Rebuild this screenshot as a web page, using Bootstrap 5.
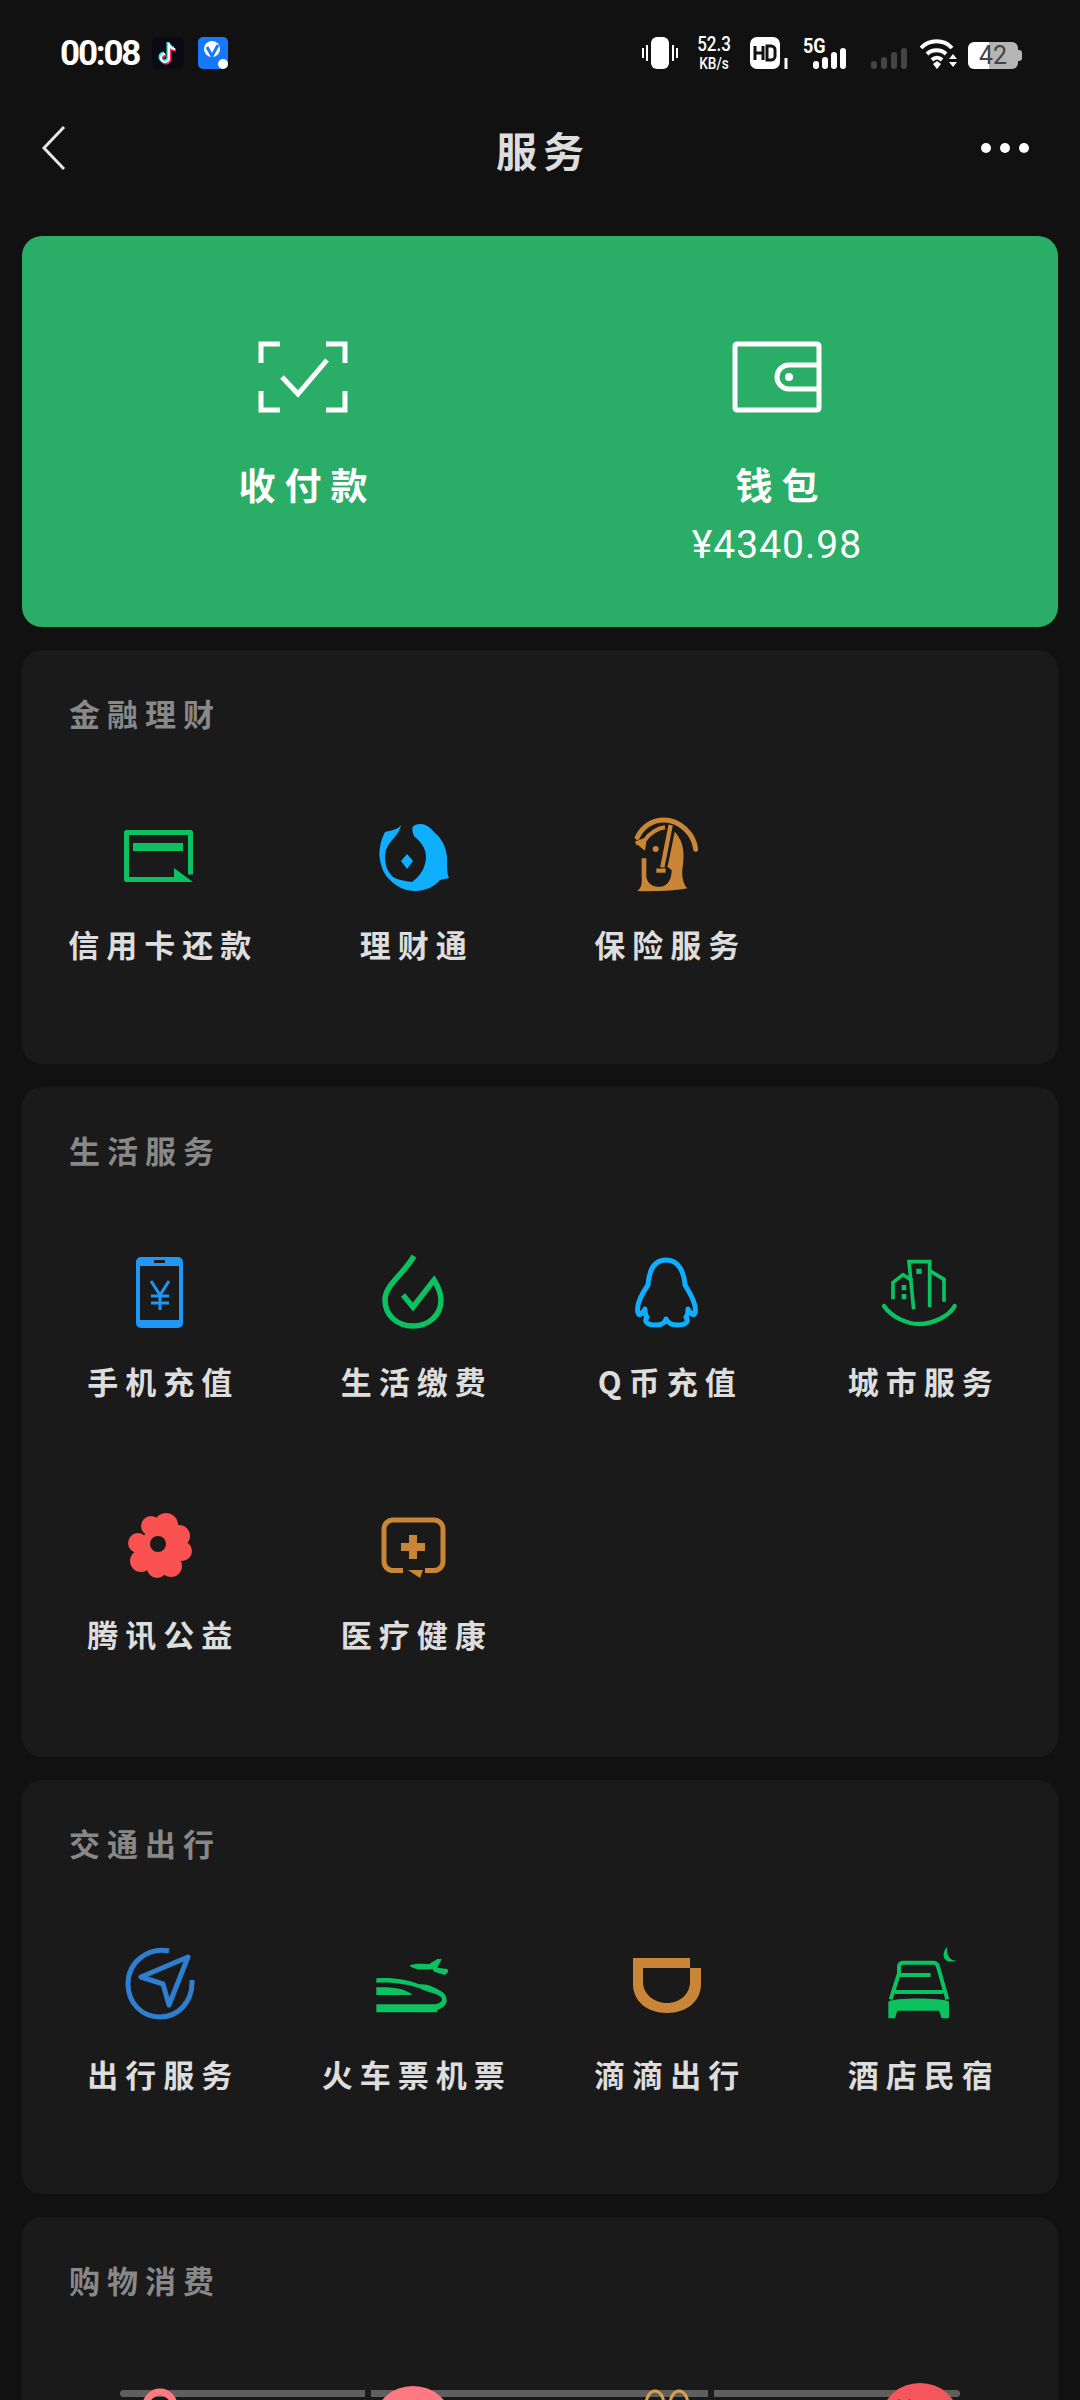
<!DOCTYPE html>
<html lang="zh">
<head>
  <meta charset="UTF-8" />
  <title>服务</title>
  <meta name="viewport" content="width=device-width, initial-scale=1" />
  <link href="https://cdn.jsdelivr.net/npm/bootstrap@5.3.3/dist/css/bootstrap.min.css" rel="stylesheet" />
  <style>
    body { background: #111; height: 2400px; overflow: hidden; font-family: "Noto Sans CJK SC", "Liberation Sans", sans-serif; }
    .status-row { height: 88px; padding: 37px 58px 0 60px; color: #fff; }
    .clock { font: 700 35px/34px Roboto, sans-serif; letter-spacing: -2.2px; width: 92px; }
    .blue-app { margin-left: 14px; }
    .net-speed { width: 48px; margin: -4px 0 0 12px; text-align: center; transform: scaleX(.85); white-space: nowrap; }
    .speed-num { font: 500 20px/22px Roboto, sans-serif; }
    .speed-unit { font: 500 16px/18px Roboto, sans-serif; }
    .hd-mark { margin-left: 12px; }
    .five-g-box { width: 46px; height: 32px; margin-left: 13px; }
    .five-g { font: 700 20px/18px Roboto, sans-serif; transform: scaleX(.9); transform-origin: left; }
    .gray-bars { margin-left: 22px; }
    .wifi-mark { margin-left: 13px; }
    .batt { width: 50px; height: 27px; margin: 5px 0 0 11px; border-radius: 6px; background: linear-gradient(90deg, #fff 42%, #b5b5b5 42%); color: #444; font: 400 25px/27px Roboto, sans-serif; text-align: center; }
    .batt-nub { width: 4px; height: 11px; margin-top: 13px; background: #b5b5b5; border-radius: 0 3px 3px 0; }
    .title-row { height: 120px; margin-bottom: 28px; padding: 0 50px 0 41px; }
    .back-slot { width: 69px; }
    .more-slot { width: 60px; }
    .page-title { font-size: 41px; line-height: 46px; font-weight: 700; color: #ddd; letter-spacing: 6px; padding-left: 6px; margin-top: 2px; }
    .pay-card { height: 391px; margin: 0 22px 23px; background: #2aae67; border-radius: 20px; padding: 105px 44px 0; color: #fff; }
    .pay-col { width: 474px; text-align: center; }
    .pay-name { font-size: 37px; line-height: 44px; font-weight: 700; letter-spacing: 9px; padding-left: 9px; margin-top: 49px; }
    .pay-sum { font: 400 39px/48px Roboto, sans-serif; letter-spacing: 1px; margin-top: 15px; }
    .svc-card { margin: 0 22px 23px; background: #1a1a1a; border-radius: 20px; padding: 42px 11px 100px; }
    .svc-card-tall { padding-bottom: 103px; }
    .svc-head { font-size: 31px; line-height: 42px; font-weight: 700; color: #888; letter-spacing: 7px; padding-left: 36px; }
    .svc-grid { display: grid; grid-template-columns: repeat(4, 1fr); grid-auto-rows: 148px; row-gap: 105px; padding-top: 82px; position: relative; }
    .svc-item { text-align: center; }
    .svc-item svg { display: block; margin: 0 auto; position: relative; z-index: 1; }
    .svc-name { font-size: 31px; line-height: 40px; font-weight: 700; color: #ddd; letter-spacing: 7px; padding-left: 7px; margin-top: 28px; white-space: nowrap; }
    .scroll-strip { position: absolute; left: 87px; top: 89px; width: 840px; height: 7px; gap: 6px; }
    .scroll-strip span { background: #5f5f5f; height: 7px; }
    .scroll-strip span:first-child { width: 245px; border-radius: 4px 0 0 4px; }
    .scroll-strip span:nth-child(2) { width: 337px; }
    .scroll-strip span:last-child { width: 246px; border-radius: 0 4px 4px 0; }
  </style>
</head>
<body>
  <div class="status-row d-flex align-items-start">
    <div class="clock">00:08</div>
    <svg width="32" height="32" viewBox="0 0 32 32"><rect width="32" height="32" rx="6" fill="#0a0a14"/><path d="M17 6v15a4 4 0 1 1-4-4M17 7c1 3 3 5 6 5" fill="none" stroke="#ff2d55" stroke-width="3" transform="translate(1 1)"/><path d="M17 6v15a4 4 0 1 1-4-4M17 7c1 3 3 5 6 5" fill="none" stroke="#25f4ee" stroke-width="3" transform="translate(-1 -1)"/><path d="M17 6v15a4 4 0 1 1-4-4M17 7c1 3 3 5 6 5" fill="none" stroke="#fff" stroke-width="2"/></svg>
    <svg class="blue-app" width="30" height="32" viewBox="0 0 30 32"><rect width="30" height="32" rx="5" fill="#1677ff"/><circle cx="14" cy="12" r="8" fill="#fff"/><path d="M9 10l5 9 6-11" fill="none" stroke="#1677ff" stroke-width="3"/><circle cx="25" cy="27" r="5" fill="#fff"/></svg>
    <div class="flex-grow-1"></div>
    <svg width="36" height="32" viewBox="0 0 36 32" fill="#fff"><rect x="9" y="0" width="18" height="32" rx="6"/><rect x="0" y="11" width="2" height="10"/><rect x="4" y="8" width="2" height="16"/><rect x="30" y="8" width="2" height="16"/><rect x="34" y="11" width="2" height="10"/></svg>
    <div class="net-speed"><div class="speed-num">52.3</div><div class="speed-unit">KB/s</div></div>
    <svg class="hd-mark" width="40" height="32" viewBox="0 0 40 32"><rect width="30" height="32" rx="7" fill="#fff"/><path d="M5 9v14M13 9v14M5 16h8" stroke="#111" stroke-width="3"/><path d="M17 9v14h4a4 4 0 0 0 4-4v-6a4 4 0 0 0-4-4z" fill="none" stroke="#111" stroke-width="3"/><path d="M36 21v11" stroke="#fff" stroke-width="3"/></svg>
    <div class="five-g-box position-relative">
      <div class="five-g">5G</div>
      <svg class="position-absolute top-0 start-0" width="46" height="32" viewBox="0 0 46 32" fill="#fff"><rect x="10" y="24" width="6" height="8" rx="3"/><rect x="19" y="20" width="6" height="12" rx="3"/><rect x="28" y="15" width="6" height="17" rx="3"/><rect x="37" y="11" width="6" height="21" rx="3"/></svg>
    </div>
    <svg class="gray-bars" width="36" height="32" viewBox="0 0 36 32" fill="#444"><rect x="0" y="24" width="6" height="8" rx="3"/><rect x="10" y="20" width="6" height="12" rx="3"/><rect x="20" y="15" width="6" height="17" rx="3"/><rect x="30" y="11" width="6" height="21" rx="3"/></svg>
    <svg class="wifi-mark" width="37" height="32" viewBox="0 0 37 32" fill="none" stroke="#fff" stroke-width="4"><path d="M1 11c8-9 23-9 31 0M7 17c5-5 14-5 19 0M12 23c3-3 7-3 10 0"/><path d="M13 27l4-3 4 3-4 5z" fill="#fff" stroke="none"/><path d="M29 22l4-5 4 5zM29 25h8l-4 5z" fill="#fff" stroke="none"/></svg>
    <div class="batt">42</div>
    <div class="batt-nub"></div>
  </div>

  <div class="title-row d-flex align-items-center justify-content-between">
    <div class="back-slot">
      <svg class="d-block" width="26" height="46" viewBox="0 0 26 46" fill="none" stroke="#e5e5e5" stroke-width="3"><path d="M23 2L3 23l20 21"/></svg>
    </div>
    <div class="page-title">服务</div>
    <div class="more-slot d-flex justify-content-end">
      <svg width="50" height="12" viewBox="0 0 50 12" fill="#fff"><circle cx="6" cy="6" r="5"/><circle cx="25" cy="6" r="5"/><circle cx="44" cy="6" r="5"/></svg>
    </div>
  </div>

  <div class="pay-card d-flex">
    <div class="pay-col">
      <svg width="90" height="72" viewBox="0 0 90 72" fill="none" stroke="#fff" stroke-width="5"><path d="M22 3H3v19M68 3h19v19M3 50v19h19M87 50v19H68"/><path d="M24 36l16 17 29-34"/></svg>
      <div class="pay-name">收付款</div>
    </div>
    <div class="pay-col">
      <svg width="90" height="72" viewBox="0 0 90 72" fill="none" stroke="#fff" stroke-width="5"><rect x="3" y="3" width="84" height="66" rx="2"/><path d="M87 24H57a12 12 0 0 0 0 24h30"/><circle cx="57" cy="36" r="4" fill="#fff" stroke="none"/></svg>
      <div class="pay-name">钱包</div>
      <div class="pay-sum">¥4340.98</div>
    </div>
  </div>

  <div class="svc-card">
    <div class="svc-head">金融理财</div>
    <div class="svc-grid">
      <div class="svc-item">
        <svg width="80" height="80" viewBox="0 0 80 80"><path d="M58 63.500H6.500v-47h64v42" fill="none" stroke="#0cc160" stroke-width="5" stroke-linejoin="round"/><path d="M13 27h50v8H13zM54 52l19 14H54z" fill="#0cc160"/></svg>
        <div class="svc-name">信用卡还款</div>
      </div>
      <div class="svc-item">
        <svg width="80" height="80" viewBox="0 0 80 80"><path d="M28 9C26 13 20 14 12 16C8 24 6 32 6.500 41C8 52 12 60 17 64C24 71 32 75 42 75C52 75 61 71 67 64L76 62C74 58 74 50 74 41C73 30 68 22 62 17C57 11 52 8 48 8C44 8 41 9 39.500 11C39 15 40 19 42 21C50 28 53 34 53 41C53 50 48 60 39 66C32 65 25 64 20 61C14 55 12 48 12 41C12 34 15 29 19 24C23 20 27 15 28 9Z" fill="#10aeff"/><path d="M34 38l6 7-6 8-6-8z" fill="#10aeff"/></svg>
        <div class="svc-name">理财通</div>
      </div>
      <div class="svc-item">
        <svg width="80" height="80" viewBox="0 0 80 80"><g transform="translate(-8 -6) scale(.3333)"><path d="M55 82C70 50 100 30 135 30C180 30 225 70 230 118" fill="none" stroke="#c98636" stroke-width="15" stroke-linecap="round"/><path d="M155 45L130 172M112 182H140" fill="none" stroke="#c98636" stroke-width="13"/><path d="M50 100L78 90C92 68 118 54 138 52" fill="none" stroke="#c98636" stroke-width="12"/><path d="M50 100L82 95L78 122Z" fill="#c98636"/><circle cx="110" cy="117" r="9" fill="#c98636"/><path d="M167 65C190 90 200 120 190 180C188 205 195 225 205 235C170 243 100 245 55 243C65 235 70 225 68 200L68 145L82 145L82 200C85 222 105 232 125 230C145 228 158 210 158 180L145 170L150 150Z" fill="#c98636"/></g></svg>
        <div class="svc-name">保险服务</div>
      </div>
    </div>
  </div>

  <div class="svc-card svc-card-tall">
    <div class="svc-head">生活服务</div>
    <div class="svc-grid">
      <div class="svc-item">
        <svg width="80" height="80" viewBox="0 0 80 80"><rect x="16" y="4" width="47" height="71" rx="5" fill="#1f97f5"/><rect x="20" y="13" width="39" height="54" fill="#1a1a1a"/><rect x="34" y="7" width="11" height="3" fill="#1a1a1a"/><path d="M31 28l9 14 9-14M40 42v15M31 43h18M31 50h18" fill="none" stroke="#1f97f5" stroke-width="3"/></svg>
        <div class="svc-name">手机充值</div>
      </div>
      <div class="svc-item">
        <svg width="80" height="80" viewBox="0 0 80 80"><path d="M41 3C30 22 12 32 12 47C12 63 25 73 40 73C55 73 68 63 68 47C68 38 64 32 61 27L40 54L30 42" fill="none" stroke="#0cc160" stroke-width="5.500"/></svg>
        <div class="svc-name">生活缴费</div>
      </div>
      <div class="svc-item">
        <svg width="80" height="80" viewBox="0 0 80 80"><path d="M39 7C27 7 22 18 21 32C14 42 9 52 11 60C12 64 16 60 18 56C18 60 18 62 20 64C16 70 22 72 29 72C34 72 38 70 39 66C41 70 45 72 50 72C57 72 63 70 59 64C61 62 61 60 61 56C63 60 67 64 68 60C70 52 64 42 58 32C57 18 51 7 39 7Z" fill="none" stroke="#10aeff" stroke-width="5" stroke-linejoin="round"/></svg>
        <div class="svc-name">Q币充值</div>
      </div>
      <div class="svc-item">
        <svg width="80" height="80" viewBox="0 0 80 80"><g transform="translate(-1 -3) scale(.3333)" fill="none" stroke="#0cc160" stroke-width="11"><path d="M15 168C40 205 90 222 120 222C160 222 210 200 227 168" stroke-width="13" stroke-linecap="round"/><path d="M104 178L90 35H152V172"/><path d="M152 62L195 88V155"/><path d="M42 148V98L72 74L100 92"/><path d="M112 56h16v16h-16zM68 105h14v16H68zM68 132h14v16H68z" fill="#0cc160" stroke="none"/></g></svg>
        <div class="svc-name">城市服务</div>
      </div>
      <div class="svc-item">
        <svg width="80" height="80" viewBox="0 0 80 80"><g fill="#fa5151"><circle cx="46" cy="19" r="12"/><circle cx="31" cy="20" r="10"/><circle cx="59" cy="30" r="11"/><circle cx="62" cy="45" r="10"/><circle cx="51" cy="60" r="11"/><circle cx="37" cy="62" r="10"/><circle cx="21" cy="55" r="11"/><circle cx="18" cy="37" r="10"/><circle cx="40" cy="40" r="19"/></g><circle cx="38" cy="38" r="8" fill="#1a1a1a"/></svg>
        <div class="svc-name">腾讯公益</div>
      </div>
      <div class="svc-item">
        <svg width="80" height="80" viewBox="0 0 80 80"><path d="M30 64.500H20a9 9 0 0 1-9-9V23a9 9 0 0 1 9-9h41a9 9 0 0 1 9 9v32.500a9 9 0 0 1-9 9H52" fill="none" stroke="#c98636" stroke-width="5"/><path d="M36 29h8v8h8v8h-8v8h-8v-8h-8v-8h8zM35 64l15 0-3 8z" fill="#c98636"/></svg>
        <div class="svc-name">医疗健康</div>
      </div>
    </div>
  </div>

  <div class="svc-card">
    <div class="svc-head">交通出行</div>
    <div class="svc-grid">
      <div class="svc-item">
        <svg width="80" height="80" viewBox="0 0 80 80" fill="none" stroke="#2f7fd0" stroke-width="5"><path d="M49 5C28 1 8 16 8 38C8 57 22 71 40 71C58 71 73 56 72 34"/><path d="M68 11L21 31L43 38L49 59Z" stroke-linejoin="round"/></svg>
        <div class="svc-name">出行服务</div>
      </div>
      <div class="svc-item">
        <svg width="80" height="80" viewBox="0 0 80 80"><g transform="translate(-4 -1) scale(.3333)" fill="#0cc160"><path d="M122 62C130 55 170 55 180 58L205 42L218 42L205 68L235 72L238 80L228 90L195 80L190 72C165 75 135 75 122 62Z"/><path d="M22 100C70 96 120 105 150 118C170 115 200 125 225 145C240 165 235 185 205 195V202H22V178H190C215 178 225 165 215 155C200 145 170 140 152 130C120 118 70 110 22 113Z"/><path d="M22 127C70 125 110 130 130 150H22Z"/></g></svg>
        <div class="svc-name">火车票机票</div>
      </div>
      <div class="svc-item">
        <svg width="80" height="80" viewBox="0 0 80 80"><path fill-rule="evenodd" d="M6 12H63V22H74V38C74 55 60 67 40 67C20 67 6 55 6 38ZM16 22V36C16 47 26 57 40 57C54 57 63 47 63 36V22Z" fill="#c98636"/></svg>
        <div class="svc-name">滴滴出行</div>
      </div>
      <div class="svc-item">
        <svg width="80" height="80" viewBox="0 0 80 80"><g transform="translate(-1 -6) scale(.3333)" fill="#0cc160"><path d="M205 20C185 40 190 75 235 62C215 65 200 45 205 20Z"/><path d="M35 178L60 100V80Q60 68 75 68H162Q175 68 177 80L205 178M58 105H155M48 156H192" fill="none" stroke="#0cc160" stroke-width="12"/><path d="M28 185C40 172 195 172 210 185V235H188L180 212H55L48 235H28Z"/></g></svg>
        <div class="svc-name">酒店民宿</div>
      </div>
    </div>
  </div>

  <div class="svc-card">
    <div class="svc-head">购物消费</div>
    <div class="svc-grid">
      <div class="d-flex scroll-strip"><span></span><span></span><span></span></div>
      <div class="svc-item"><svg width="80" height="80" viewBox="0 0 80 80"><circle cx="40" cy="23" r="14" fill="none" stroke="#ff7a80" stroke-width="7"/></svg></div>
      <div class="svc-item"><svg width="80" height="80" viewBox="0 0 80 80"><ellipse cx="40" cy="37" rx="38" ry="34" fill="#ff7a80"/></svg></div>
      <div class="svc-item"><svg width="80" height="80" viewBox="0 0 80 80" fill="none" stroke="#d9a050" stroke-width="3"><ellipse cx="28" cy="22" rx="9" ry="14"/><ellipse cx="52" cy="22" rx="9" ry="14"/></svg></div>
      <div class="svc-item"><svg width="80" height="80" viewBox="0 0 80 80"><ellipse cx="40" cy="34" rx="38" ry="34" fill="#f4565c"/><path d="M18 16l8 4 4-4 2 8H20z" fill="#1a1a1a"/></svg></div>
    </div>
  </div>

  <script src="https://cdn.jsdelivr.net/npm/bootstrap@5.3.3/dist/js/bootstrap.bundle.min.js"></script>
</body>
</html>
